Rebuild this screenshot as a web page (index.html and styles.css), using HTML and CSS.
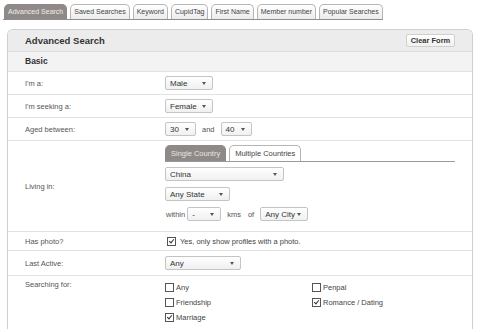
FILE: index.html
```html
<!DOCTYPE html>
<html lang="en">
<head>
  <meta charset="UTF-8">
  <title>Advanced Search</title>
  <link rel="stylesheet" href="styles.css">
</head>
<body>
  <div class="tabs">
    <span class="tab active">Advanced Search</span>
    <span class="tab">Saved Searches</span>
    <span class="tab">Keyword</span>
    <span class="tab">CupidTag</span>
    <span class="tab">First Name</span>
    <span class="tab">Member number</span>
    <span class="tab">Popular Searches</span>
  </div>

  <div class="panel">
    <div class="panel-head">
      <h2>Advanced Search</h2>
      <button class="clear">Clear Form</button>
    </div>
    <div class="section">Basic</div>

    <div class="row">
      <div class="label">I'm a:</div>
      <div class="field"><span class="sel w48">Male<i class="arr"></i></span></div>
    </div>
    <div class="row">
      <div class="label">I'm seeking a:</div>
      <div class="field"><span class="sel w48">Female<i class="arr"></i></span></div>
    </div>
    <div class="row">
      <div class="label">Aged between:</div>
      <div class="field inline">
        <span class="sel w31">30<i class="arr"></i></span>
        <span class="txt">and</span>
        <span class="sel w31">40<i class="arr"></i></span>
      </div>
    </div>
    <div class="row living">
      <div class="label">Living in:</div>
      <div class="field stack">
        <div class="subtabs">
          <span class="subtab active">Single Country</span>
          <span class="subtab">Multiple Countries</span>
        </div>
        <span class="sel w119">China<i class="arr"></i></span>
        <span class="sel w65">Any State<i class="arr"></i></span>
        <div class="inline">
          <span class="txt tight">within</span>
          <span class="sel w34">-<i class="arr"></i></span>
          <span class="txt">kms</span>
          <span class="txt">of</span>
          <span class="sel w48">Any City<i class="arr"></i></span>
        </div>
      </div>
    </div>
    <div class="row photo">
      <div class="label">Has photo?</div>
      <div class="field"><label class="check"><span class="box on"></span>Yes, only show profiles with a photo.</label></div>
    </div>
    <div class="row active-row">
      <div class="label">Last Active:</div>
      <div class="field"><span class="sel w76">Any<i class="arr"></i></span></div>
    </div>
    <div class="row top">
      <div class="label">Searching for:</div>
      <div class="field checks">
        <label class="check"><span class="box"></span>Any</label>
        <label class="check"><span class="box"></span>Penpal</label>
        <label class="check"><span class="box"></span>Friendship</label>
        <label class="check"><span class="box on"></span>Romance / Dating</label>
        <label class="check"><span class="box on"></span>Marriage</label>
      </div>
    </div>
  </div>
</body>
</html>
```

FILE: styles.css
```css
body {
  margin: 0;
  padding: 4px 10px 0 3px;
  font-family: 'Liberation Sans', Arial, sans-serif;
  font-size: 7.5px;
  color: #555;
  background: #fff;
}
.tabs {
  display: inline-flex;
  gap: 3px;
  padding-left: 1px;
  border-bottom: 1px solid #8e8e8e;
}
.tab {
  height: 14px;
  line-height: 14px;
  padding: 0 3px;
  border: 1px solid #b5b5b5;
  border-bottom: none;
  border-radius: 5px 5px 0 0;
  background: linear-gradient(#fff, #ececec);
  color: #444;
  font-size: 7px;
  white-space: nowrap;
}
.tab.active {
  background: #8f8a87;
  border-color: #8f8a87;
  color: #eee;
}
.panel {
  margin: 9px 0 0 4px;
  border: 1px solid #cfcfcf;
  border-bottom: none;
  border-radius: 6px 6px 0 0;
  overflow: hidden;
}
.panel-head {
  display: flex;
  justify-content: space-between;
  align-items: center;
  height: 21px;
  padding: 0 17px;
  background: #ececec;
  border-bottom: 1px solid #dcdcdc;
}
h2 {
  margin: 0;
  font-size: 9.5px;
  font-weight: 700;
  color: #333;
}
.clear {
  height: 13px;
  width: 49px;
  padding: 0;
  font-family: inherit;
  font-size: 7.5px;
  font-weight: 700;
  color: #333;
  background: linear-gradient(#fff, #f1f1f1);
  border: 1px solid #d0d0d0;
  border-radius: 2px;
}
.section {
  height: 19px;
  line-height: 19px;
  padding-left: 17px;
  background: #f3f3f3;
  font-size: 8.5px;
  font-weight: 700;
  color: #333;
}
.row {
  display: grid;
  grid-template-columns: 157px 1fr;
  align-items: center;
  min-height: 22px;
  border-top: 1px solid #e2e2e2;
}
.label {
  padding-left: 17px;
  color: #555;
}
.field {
  display: flex;
  align-items: center;
}
.inline {
  display: flex;
  align-items: center;
  gap: 5px;
}
.stack {
  flex-direction: column;
  align-items: flex-start;
  gap: 6px;
  padding: 4px 0 10px;
}
.sel {
  position: relative;
  display: inline-flex;
  align-items: center;
  box-sizing: border-box;
  height: 14px;
  padding-left: 4px;
  border: 1px solid #c4c4c4;
  border-radius: 2px;
  background: linear-gradient(#fff, #f0f0f0);
  color: #333;
  font-size: 8px;
  white-space: nowrap;
}
.arr {
  position: absolute;
  right: 6px;
  top: 5px;
  border-left: 2.5px solid transparent;
  border-right: 2.5px solid transparent;
  border-top: 3px solid #555;
}
.w31 { width: 31px; }
.w34 { width: 34px; }
.w48 { width: 48px; }
.w65 { width: 65px; }
.w76 { width: 76px; }
.w119 { width: 119px; }
.txt { color: #555; margin: 0 1px; }
.txt.tight { margin-right: -3px; }
.subtabs {
  display: flex;
  gap: 3px;
  width: 290px;
  border-bottom: 1px solid #9a9a9a;
  margin-bottom: -1px;
}
.subtab {
  height: 15px;
  line-height: 15px;
  padding: 0 5px;
  border: 1px solid #b5b5b5;
  border-bottom: none;
  border-radius: 5px 5px 0 0;
  background: #fff;
  color: #444;
}
.subtab.active {
  background: #8f8a87;
  border-color: #8f8a87;
  color: #e6e6e6;
}
.row.photo { min-height: 18px; }
.row.active-row { min-height: 24px; }
.row.top { align-items: start; padding: 4px 0 4px; }
.check {
  display: flex;
  align-items: center;
  gap: 2px;
  color: #444;
  height: 15px;
}
.photo .check { padding-left: 2px; gap: 4px; }
.checks {
  display: grid;
  grid-template-columns: 147px 1fr;
}
.box {
  position: relative;
  box-sizing: border-box;
  width: 9px;
  height: 9px;
  border: 1px solid #555;
  background: #fff;
}
.box.on::after {
  content: "";
  position: absolute;
  left: 2px;
  top: 0;
  width: 2px;
  height: 4px;
  border-right: 1px solid #333;
  border-bottom: 1px solid #333;
  transform: rotate(40deg);
}
```
